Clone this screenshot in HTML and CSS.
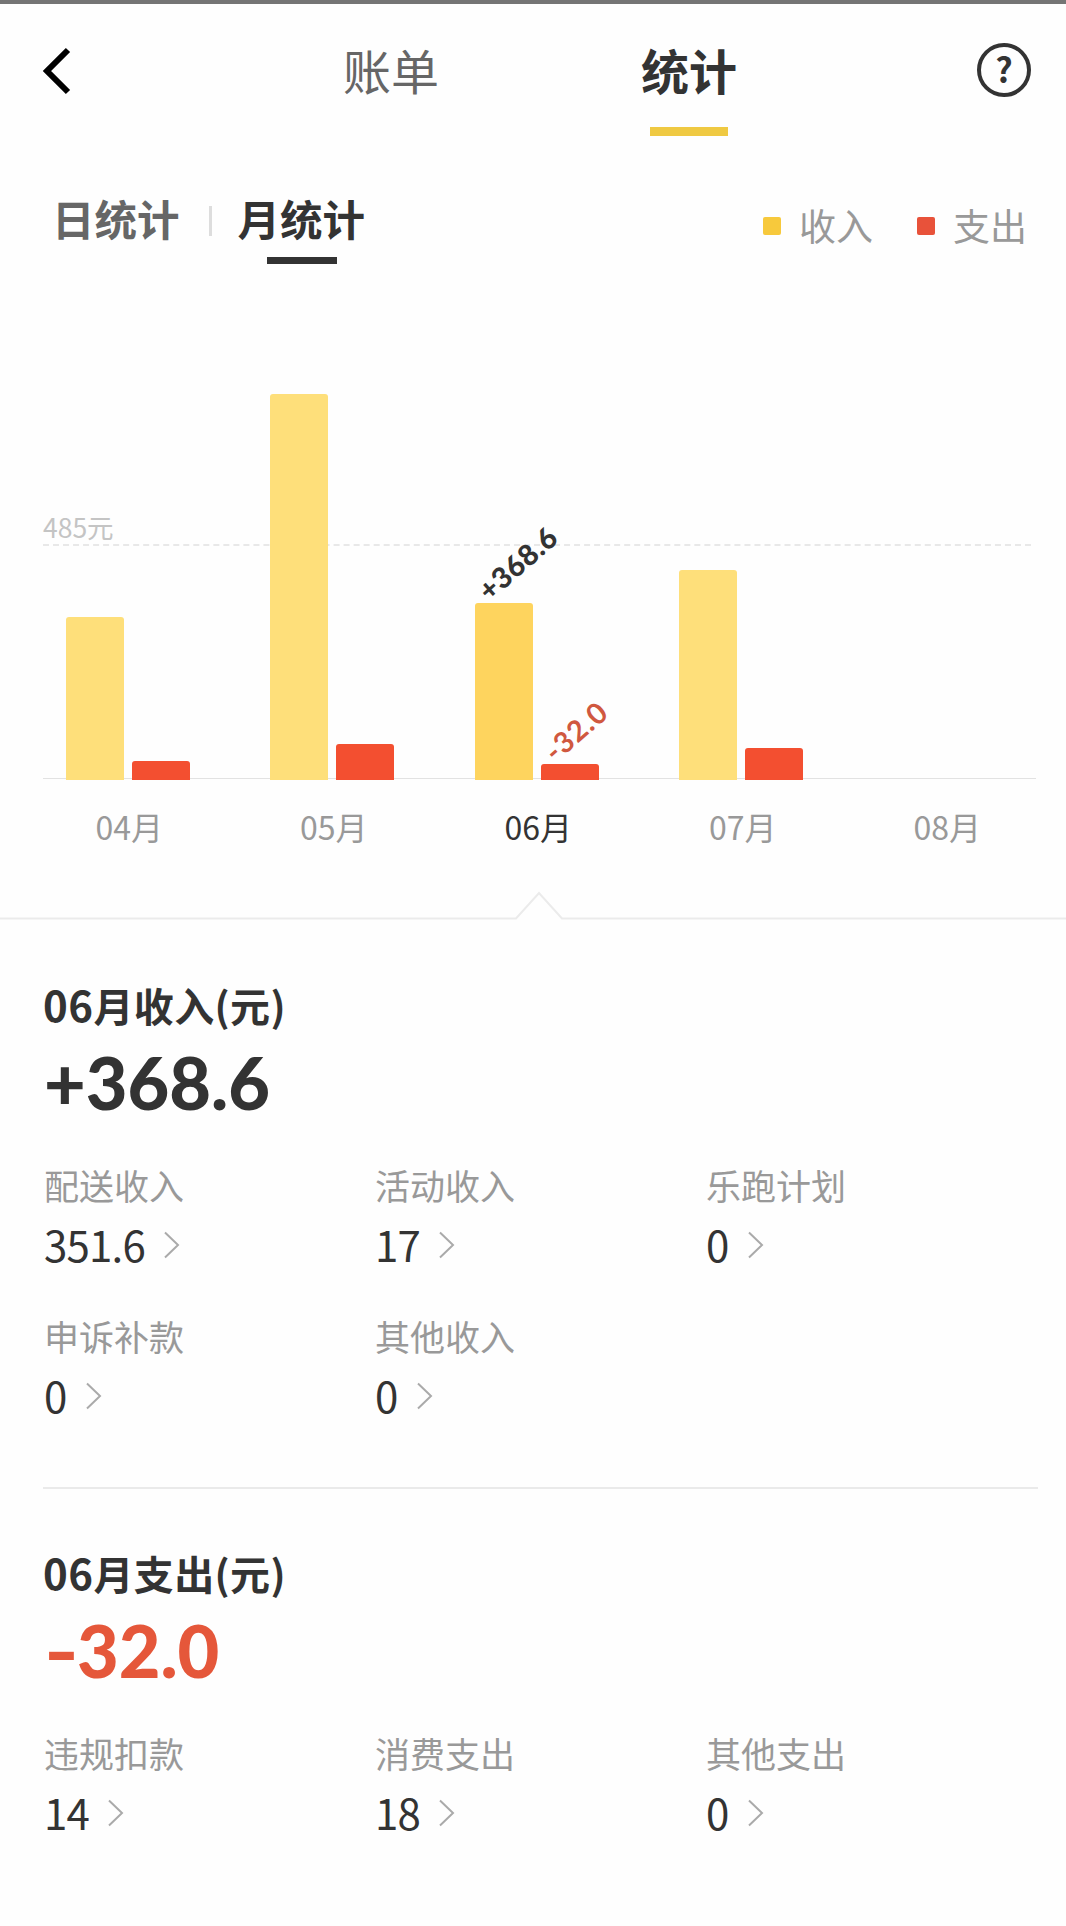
FILE: index.html
```html
<!DOCTYPE html>
<html lang="zh-CN">

<head>
  <meta charset="UTF-8">
  <meta name="viewport" content="width=device-width, initial-scale=1.0">
  <title>统计</title>
  <link rel="stylesheet" href="styles.css">
</head>

<body>
  <header class="header">
    <svg class="back" width="30" height="48" viewBox="0 0 30 48"><path d="M26 3 5 24l21 21" /></svg>
    <nav class="tab">账单</nav>
    <nav class="tab active">统计</nav>
    <div class="help">?</div>
  </header>

  <main>
    <div class="toolbar">
      <div class="period">日统计</div>
      <div class="split"></div>
      <div class="period active">月统计</div>
      <div class="legend">
        <span class="key income">收入</span>
        <span class="key expense">支出</span>
      </div>
    </div>

    <section class="chart">
      <div class="guide">485元</div>
      <div class="month">
        <div class="bars">
          <div class="bar income" style="height: 163px"></div>
          <div class="bar expense" style="height: 19px"></div>
        </div>
        <span class="name">04月</span>
      </div>
      <div class="month">
        <div class="bars">
          <div class="bar income" style="height: 386px"></div>
          <div class="bar expense" style="height: 36px"></div>
        </div>
        <span class="name">05月</span>
      </div>
      <div class="month active">
        <div class="bars">
          <div class="bar income" style="height: 177px"><b class="tip">+368.6</b></div>
          <div class="bar expense" style="height: 16px"><b class="tip">-32.0</b></div>
        </div>
        <span class="name">06月</span>
      </div>
      <div class="month">
        <div class="bars">
          <div class="bar income" style="height: 210px"></div>
          <div class="bar expense" style="height: 32px"></div>
        </div>
        <span class="name">07月</span>
      </div>
      <div class="month">
        <div class="bars"></div>
        <span class="name">08月</span>
      </div>
    </section>

    <svg class="notch" width="1066" height="30" viewBox="0 0 1066 30"><path d="M0 27.5H516L539 2l23 25.5h504" /></svg>

    <section class="summary">
      <h2><span class="num">06</span>月收入(元)</h2>
      <div class="total">+368.6</div>
      <dl class="items">
        <div>
          <dt>配送收入</dt>
          <dd>351.6<svg class="more" viewBox="0 0 16 28"><path d="m1 1.5 13 12.5L1 26.5" /></svg></dd>
        </div>
        <div>
          <dt>活动收入</dt>
          <dd>17<svg class="more" viewBox="0 0 16 28"><path d="m1 1.5 13 12.5L1 26.5" /></svg></dd>
        </div>
        <div>
          <dt>乐跑计划</dt>
          <dd>0<svg class="more" viewBox="0 0 16 28"><path d="m1 1.5 13 12.5L1 26.5" /></svg></dd>
        </div>
        <div>
          <dt>申诉补款</dt>
          <dd>0<svg class="more" viewBox="0 0 16 28"><path d="m1 1.5 13 12.5L1 26.5" /></svg></dd>
        </div>
        <div>
          <dt>其他收入</dt>
          <dd>0<svg class="more" viewBox="0 0 16 28"><path d="m1 1.5 13 12.5L1 26.5" /></svg></dd>
        </div>
      </dl>
    </section>

    <hr class="divider">

    <section class="summary">
      <h2><span class="num">06</span>月支出(元)</h2>
      <div class="total expense"><span class="minus">-</span>32.0</div>
      <dl class="items">
        <div>
          <dt>违规扣款</dt>
          <dd>14<svg class="more" viewBox="0 0 16 28"><path d="m1 1.5 13 12.5L1 26.5" /></svg></dd>
        </div>
        <div>
          <dt>消费支出</dt>
          <dd>18<svg class="more" viewBox="0 0 16 28"><path d="m1 1.5 13 12.5L1 26.5" /></svg></dd>
        </div>
        <div>
          <dt>其他支出</dt>
          <dd>0<svg class="more" viewBox="0 0 16 28"><path d="m1 1.5 13 12.5L1 26.5" /></svg></dd>
        </div>
      </dl>
    </section>
  </main>
</body>

</html>
```
FILE: styles.css
```css
* {
  box-sizing: border-box;
}

body {
  margin: 0;
  min-height: 1926px;
  border-top: 4px solid #757575;
  background-color: #fefefe;
  color: #333;
  font-family: "Noto Sans CJK SC", sans-serif;
}

svg {
  display: block;
  fill: none;
}

/* Top navigation */
.header {
  display: grid;
  grid-template-columns: 242px 298px 298px 228px;
  padding-top: 35px;
}

.back {
  margin: 8px 0 0 42px;
  stroke: #000;
  stroke-width: 6;
}

.tab {
  font-size: 48px;
  line-height: 60px;
  text-align: center;
  color: #666;

  &.active {
    font-weight: 700;
    color: #333;
  }

  &.active::after {
    content: "";
    display: block;
    width: 78px;
    height: 9px;
    margin: 28px auto 0;
    background-color: #efc942;
  }
}

.help {
  width: 54px;
  height: 54px;
  margin: 4px 0 0 139px;
  border: 4px solid #333;
  border-radius: 50%;
  font-size: 34px;
  font-weight: 700;
  line-height: 44px;
  text-align: center;
}

/* Day / month switch and legend */
.toolbar {
  display: flex;
  align-items: flex-start;
  height: 128px;
  padding: 57px 39px 0 52px;
}

.period {
  font-size: 42.5px;
  font-weight: 700;
  line-height: 50px;
  color: #666;

  &.active {
    color: #333;
  }

  &.active::after {
    content: "";
    display: block;
    width: 70px;
    height: 7px;
    margin: 14px 0 0 29px;
    background-color: #333;
  }
}

.split {
  width: 3px;
  height: 30px;
  margin: 13px 26px 0 29px;
  background-color: #ddd;
}

.legend {
  display: flex;
  gap: 44px;
  margin: 7px 0 0 auto;
}

.key {
  display: flex;
  align-items: center;
  gap: 18px;
  font-size: 37px;
  line-height: 50px;
  color: #999;

  &::before {
    content: "";
    width: 18px;
    height: 18px;
    margin-top: 1px;
    border-radius: 2px;
    background-color: #f7c93c;
  }

  &.expense::before {
    background-color: #e8523a;
  }
}

/* Bar chart */
.chart {
  position: relative;
  display: flex;
  padding-left: 25.5px;

  &::before {
    content: "";
    position: absolute;
    top: 514px;
    left: 43px;
    width: 993px;
    height: 1px;
    background-color: #e2e2e2;
  }
}

.guide {
  position: absolute;
  top: 247px;
  left: 43px;
  width: 988px;
  height: 35px;
  border-bottom: 2px dashed #e8e8e8;
  font-size: 26.5px;
  line-height: 32px;
  color: #c4c4c4;
}

.month {
  position: relative;
  width: 204.5px;
  text-align: center;
  font-size: 32px;
  line-height: 40px;
  color: #999;

  &.active {
    color: #333;
  }
}

.bars {
  display: flex;
  align-items: flex-end;
  justify-content: center;
  gap: 8px;
  height: 516px;
  margin-bottom: 26px;
}

.bar {
  position: relative;
  width: 58px;
  border-radius: 3px 3px 0 0;

  &.income {
    background-color: #fedf7a;
  }

  &.expense {
    background-color: #f34f30;
  }

  .active &.income {
    background-color: #fed45e;
  }
}

.tip {
  position: absolute;
  left: 7px;
  bottom: calc(100% - 6px);
  font-family: Lato, sans-serif;
  font-size: 29px;
  font-weight: 900;
  line-height: 30px;
  letter-spacing: 0.5px;
  transform: rotate(-41deg);
  transform-origin: 0 50%;

  .expense & {
    color: #d0583f;
    font-weight: 700;
    letter-spacing: 1px;
  }
}

.name {
  padding-left: 3px;
}

.notch {
  margin-top: 45px;
  stroke: #ebebeb;
  stroke-width: 2;
}

/* Monthly totals */
.summary {
  padding: 58px 0 72px 44px;
}

.divider {
  height: 2px;
  margin: 0 28px 0 43px;
  border: 0;
  background-color: #eaeaea;
}

h2 {
  margin: 0 0 0 -1px;
  font-size: 40px;
  font-weight: 700;
  line-height: 50px;
  letter-spacing: 0.4px;
}

.num {
  font-size: 42px;
}

.total {
  margin-top: 12px;
  font-family: Lato, sans-serif;
  font-size: 72px;
  font-weight: 900;
  line-height: 80px;

  &.expense {
    color: #e5573a;
  }
}

.minus {
  display: inline-block;
  margin-right: 6px;
  transform: scaleX(1.3);
  transform-origin: 0 50%;
}

.items {
  display: grid;
  grid-template-columns: repeat(3, 331px);
  row-gap: 51.5px;
  margin: 43px 0 0;
}

dt {
  font-size: 35px;
  line-height: 40px;
  color: #999;
}

dd {
  display: flex;
  align-items: center;
  gap: 19px;
  margin: 19px 0 0;
  font-size: 42px;
  line-height: 40px;
  letter-spacing: -0.8px;
}

.more {
  width: 16px;
  height: 28px;
  margin-top: 2px;
  stroke: #aaa;
  stroke-width: 2;
}
```
